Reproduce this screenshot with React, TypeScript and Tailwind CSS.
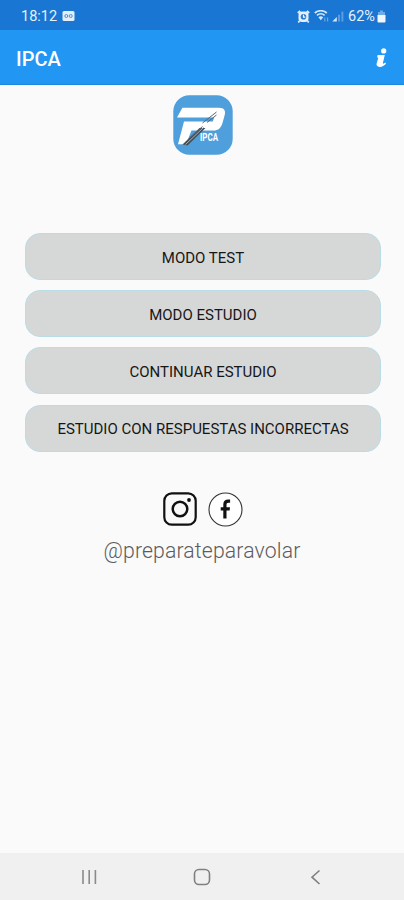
import type { ReactNode } from 'react';

const MENU_ITEMS = [
  'MODO TEST',
  'MODO ESTUDIO',
  'CONTINUAR ESTUDIO',
  'ESTUDIO CON RESPUESTAS INCORRECTAS',
];

function StatusBar() {
  return (
    <div className="flex h-[30px] items-center bg-[#1976d2] pl-[21px] pr-[18px] pt-[2px] text-white">
      <span className="w-[41px] whitespace-nowrap pt-px text-[14.5px] leading-4 text-[#e6f1fb]">18:12</span>
      <svg width="13" height="10" viewBox="0 0 13 10" aria-hidden="true">
        <rect x="0.5" y="0" width="12" height="10" rx="1.5" fill="#e3effa" />
        <circle cx="4.3" cy="5" r="1.5" fill="none" stroke="#4c8fd6" />
        <circle cx="8.7" cy="5" r="1.5" fill="none" stroke="#4c8fd6" />
      </svg>
      <div className="ml-auto flex items-center">
        <svg width="13" height="13" viewBox="0 0 13 13" className="mr-[4px]" aria-hidden="true">
          <path d="M0.8 3 3.2 0.9M12.2 3 9.8 0.9M2.5 11.2 1.2 12.4M10.5 11.2l1.3 1.2" stroke="#e3effa" strokeWidth="1.8" />
          <rect x="1.5" y="1.5" width="10" height="10.5" rx="3.5" fill="#e3effa" />
          <circle cx="6.5" cy="6.8" r="2.8" fill="#2a7dd0" />
          <path d="M6.5 4.8v2.3h1.8" fill="none" stroke="#fff" strokeWidth="1.1" />
        </svg>
        <svg width="16" height="13" viewBox="0 0 16 13" className="mr-[2px]" aria-hidden="true">
          <path d="M0.8 3C4.2 0 9.4 0 12.8 3M3 5.4c2.2-2 5.4-2 7.6 0" fill="none" stroke="#d6e7f8" strokeWidth="1.7" />
          <path d="M4.4 7.2c1.5-1.2 3.3-1.2 4.8 0L6.8 10.2z" fill="#d6e7f8" />
          <path d="M10.8 7.5v4M13.6 7.5v4" stroke="#69a6e2" strokeWidth="1.2" />
        </svg>
        <svg width="12" height="12" viewBox="0 0 12 12" className="mr-[4px]" aria-hidden="true">
          <path d="M0.3 11.5 4.8 7v4.5z" fill="#d6e7f8" />
          <path d="M7 4.8v6.7M10.4 1.5v10" stroke="#5b9ce0" strokeWidth="2" />
        </svg>
        <span className="w-[29px] whitespace-nowrap pt-px text-[14.5px] leading-4 text-[#e6f1fb]">62%</span>
        <svg width="9" height="13" viewBox="0 0 9 13" aria-hidden="true">
          <path d="M3 0.5h3v1.5h2v3.5H1V2h2z" fill="#6eaae5" />
          <path d="M0.5 5h8v6.5a1 1 0 0 1-1 1h-6a1 1 0 0 1-1-1z" fill="#f0f7fd" />
        </svg>
      </div>
    </div>
  );
}

function AppBar() {
  return (
    <header className="flex h-[55px] items-center justify-between border-b border-[#1c86e2] bg-[#2196f3] pl-4 pr-[17px] text-white">
      <h1 className="pt-[3px] text-[20px] font-medium leading-6">IPCA</h1>
      <button type="button" aria-label="Info" className="pt-[1px]">
        <svg width="11" height="20" viewBox="0 0 11 20">
          <circle cx="7.7" cy="2.9" r="2.6" fill="#fff" />
          <path
            d="M1.6 7h7.2L6.9 15c-.2.9.5.9 1.3.3l1.1-.8.7 1.2c-1.9 2.2-4.2 3.4-6.5 3.2C1.2 18.700.2 17.400.6 15.500L2.300 9.700 1.200 9.500z"
            fill="#fff"
          />
        </svg>
      </button>
    </header>
  );
}

function Logo() {
  return (
    <svg width="60" height="60" viewBox="0 0 60 60" role="img" aria-label="IPCA">
      <rect x="0.3" y="0.3" width="59.4" height="59.4" rx="16" fill="#4f9fdd" />
      <path
        d="M9.4 12.7H46C51 12.7 53 15.5 51.7 20L49.5 28C48 33 45.3 35.5 40.5 35.5H18.5L13 49.3H5L11 26.500H39.800L41.200 22.500H4z"
        fill="#fff"
      />
      <path d="M9.500 49.500 26.500 33h6L14.500 50.500z" fill="#454e55" />
      <path d="M17 42.500 29.500 31.500M29.500 28l14-11M34 27.500l9.500-7.500" stroke="#5a6670" strokeWidth="1" />
      <path d="M12.500 49.500 31 32" stroke="#a9bcc9" strokeWidth="0.9" />
      <text x="27" y="46" fill="#fff" fontSize="10" fontWeight="700" textLength="18" lengthAdjust="spacingAndGlyphs">
        IPCA
      </text>
    </svg>
  );
}

function MenuButton({ children }: { children: ReactNode }) {
  return (
    <button
      type="button"
      className="h-[47px] w-full rounded-[15px] border border-[#b9dce6] bg-[#d6d8d7] pt-[2px] text-[15px] leading-5 text-[#161616]"
    >
      {children}
    </button>
  );
}

function SocialLinks() {
  return (
    <div className="flex items-center justify-center gap-[11px]">
      <svg width="34" height="34" viewBox="0 0 34 34" fill="none" stroke="#111" aria-label="Instagram">
        <rect x="1.3" y="1.3" width="31.4" height="31.4" rx="7.5" strokeWidth="2.2" />
        <circle cx="17" cy="17" r="7.3" strokeWidth="2.5" />
        <circle cx="26" cy="8" r="1.9" fill="#111" stroke="none" />
      </svg>
      <svg width="35" height="35" viewBox="0 0 35 35" aria-label="Facebook">
        <circle cx="17.5" cy="17.5" r="16.5" fill="#fff" stroke="#333" strokeWidth="1.1" />
        <path
          d="M15.3 26.5v-8h-2.6v-3.2h2.6v-2.700c0-3.300 1.800-5 4.800-5h2v3.100h-1.600c-1.500 0-2 .7-2 2v2.600h3.500l-.4 3.200h-3.100v8z"
          fill="#111"
        />
      </svg>
    </div>
  );
}

function NavigationBar() {
  return (
    <nav className="flex h-[47px] items-center justify-between bg-[#f0f0f0] px-20">
      <svg width="18" height="18" viewBox="0 0 18 18" stroke="#8a8a8a" strokeWidth="1.6" aria-label="Recents">
        <path d="M3 2v14M9.2 2v14M15.4 2v14" />
      </svg>
      <svg width="18" height="18" viewBox="0 0 18 18" fill="none" stroke="#808080" strokeWidth="1.6" aria-label="Home">
        <rect x="1.5" y="1.5" width="15" height="15" rx="4.5" />
      </svg>
      <svg width="18" height="18" viewBox="0 0 18 18" fill="none" stroke="#808080" strokeWidth="1.6" aria-label="Back">
        <path d="M13.500 2.500 6 9.200 13.500 16" />
      </svg>
    </nav>
  );
}

export default function App() {
  return (
    <div className="flex h-[900px] w-[404px] flex-col overflow-hidden bg-[#fafafa] font-['Roboto',sans-serif]">
      <StatusBar />
      <AppBar />
      <main className="flex flex-1 flex-col pt-[10px]">
        <div className="flex justify-center pl-px">
          <Logo />
        </div>
        <div className="mt-[78px] flex flex-col gap-[10.2px] pl-[25px] pr-[23px]">
          {MENU_ITEMS.map((label) => (
            <MenuButton key={label}>{label}</MenuButton>
          ))}
        </div>
        <div className="mt-[40px] pl-px">
          <SocialLinks />
        </div>
        <p className="mt-[10px] text-center text-[21.2px] font-light leading-7 tracking-[0.15px] text-[#5c5c5c]">
          @preparateparavolar
        </p>
      </main>
      <NavigationBar />
    </div>
  );
}
